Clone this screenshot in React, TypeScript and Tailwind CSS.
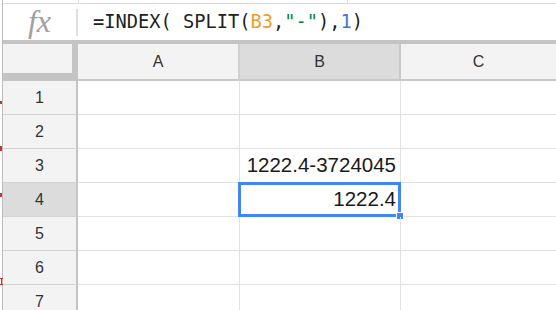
import React from "react";

const rows = [1, 2, 3, 4, 5, 6, 7];

export default function App() {
  return (
    <div className="relative w-[556px] h-[310px] overflow-hidden bg-white pl-[2px] font-['Liberation_Sans',Arial,sans-serif]">
      <div className="h-full border-l border-[#bdbdbd] flex flex-col">
        {/* top strip */}
        <div className="h-[4px] shrink-0 border-b border-[#dcdcdc] flex">
          <div className="w-[76px] border-r border-[#dcdcdc]" />
          <div className="w-[269px] border-r border-[#dcdcdc]" />
        </div>
        {/* formula bar */}
        <div className="h-[36px] shrink-0 flex items-center">
          <div className="w-[73px] flex justify-center items-center">
            <span className="font-['Liberation_Serif',serif] italic text-[32px] leading-none text-[#a0a0a0] -mt-[2px]">
              fx
            </span>
          </div>
          <div className="w-[2px] h-[27px] bg-[#e0e0e0]" />
          <div className="pl-[15px] font-['DejaVu_Sans_Mono',monospace] text-[18.7px] text-[#222] whitespace-pre">
            =INDEX( SPLIT(<span className="text-[#f09d2a]">B3</span>,<span className="text-[#0b8043]">"-"</span>),<span className="text-[#3c78d8]">1</span>)
          </div>
        </div>
        {/* freeze bar */}
        <div className="h-[4px] shrink-0 bg-[#c4c4c4]" />
        {/* header row */}
        <div className="h-[37px] shrink-0 flex">
          <div className="w-[75px] h-full bg-[#c4c4c4]">
            <div className="w-[69px] h-[29px] bg-[#f3f3f3]" />
          </div>
          <div className="w-[162px] h-full bg-[#f3f3f3] border-r-2 border-b-2 border-r-[#d0d0d0] border-b-[#c8c8c8] flex items-center justify-center text-[16px] text-[#333]">
            A
          </div>
          <div className="w-[161px] h-full bg-[#dcdcdc] border-r-2 border-b-2 border-r-[#c8c8c8] border-b-[#c8c8c8] flex items-center justify-center text-[16px] text-[#333]">
            B
          </div>
          <div className="flex-1 h-full bg-[#f3f3f3] border-b-2 border-[#c8c8c8] flex items-center justify-center text-[16px] text-[#333]">
            C
          </div>
        </div>
        {/* rows */}
        {rows.map((r) => (
          <div key={r} className="h-[34px] shrink-0 flex">
            <div
              className={`w-[75px] h-full border-r-2 border-b border-r-[#c4c4c4] border-b-[#d2d2d2] flex items-center justify-center text-[16px] text-[#333] ${
                r === 4 ? "bg-[#dcdcdc]" : "bg-[#f3f3f3]"
              }`}
            >
              {r}
            </div>
            <div className="w-[162px] h-full border-r border-b border-[#e2e2e2]" />
            <div className="relative w-[161px] h-full border-r border-b border-[#e2e2e2] flex items-center justify-end pr-[4px] text-[20.5px] text-[#1a1a1a] whitespace-nowrap">
              {r === 3 ? "1222.4-3724045" : r === 4 ? "1222.4" : ""}
              {r === 4 && (
                <>
                  <div className="absolute -left-[2px] -top-[1px] w-[163px] h-[35px] border-[3px] border-[#4285f4]" />
                  <div className="absolute left-[156px] top-[29px] w-[8px] h-[8px] bg-[#4285f4] border border-white" />
                </>
              )}
            </div>
            <div className="flex-1 h-full border-b border-[#e2e2e2]" />
          </div>
        ))}
      </div>
      {/* small red cursor marks at left edge */}
      <div className="absolute left-0 top-[101px] w-[2px] h-[3px] bg-[#c0392b]" />
      <div className="absolute left-0 top-[146px] w-[2px] h-[5px] bg-[#c0392b]" />
      <div className="absolute left-0 top-[193px] w-[2px] h-[4px] bg-[#c0392b]" />
      <div className="absolute left-0 top-[278px] w-[3px] h-[7px] border-y border-[#c0392b]">
        <div className="mx-auto w-[1px] h-full bg-[#c0392b]" />
      </div>
    </div>
  );
}
